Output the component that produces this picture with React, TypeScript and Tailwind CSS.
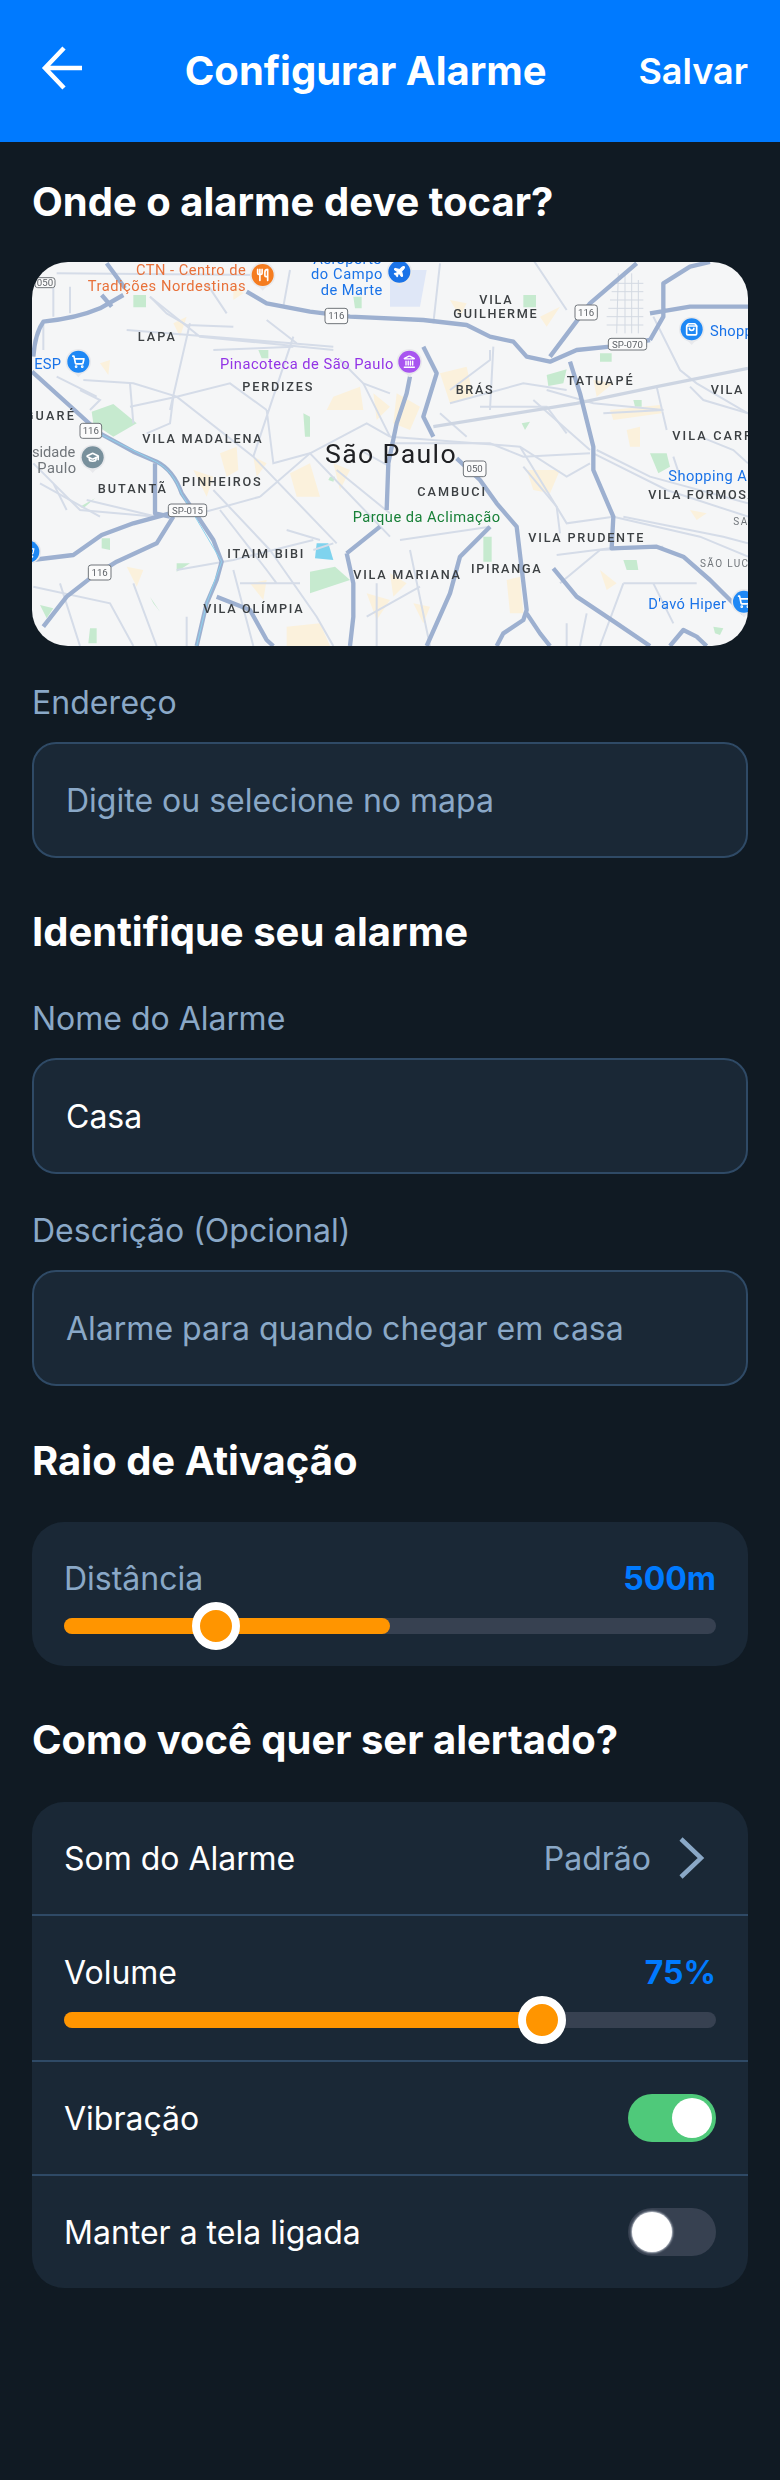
import React from 'react';
import { GraduationCap, Landmark, Plane, ShoppingBag, ShoppingCart, Utensils } from 'lucide-react';

type Label = [string, number, number, number, number?, string?];

const mapFont = { fontFamily: 'Roboto, "Liberation Sans", sans-serif' };

// [text, x start, x end, baseline]; coordinates are map units, 3 per screen pixel
const districts: Label[] = [
  ['LAPA', 413, 525, 272],
  ['PERDIZES', 727, 937, 424],
  ['GUARÉ', 74, 222, 510],
  ['VILA MADALENA', 427, 785, 579],
  ['BUTANTÃ', 293, 498, 728],
  ['PINHEIROS', 546, 782, 707],
  ['ITAIM BIBI', 682, 910, 925],
  ['VILA OLÍMPIA', 610, 908, 1090],
  ['VILA MARIANA', 1060, 1380, 987],
  ['VILA', 1438, 1535, 163],
  ['GUILHERME', 1360, 1610, 204],
  ['BRÁS', 1367, 1478, 432],
  ['TATUAPÉ', 1700, 1898, 406],
  ['VILA', 2132, 2227, 433],
  ['VILA CARRÃO', 2017, 2320, 571],
  ['VILA FORMOSA', 1945, 2268, 747],
  ['CAMBUCI', 1252, 1455, 737],
  ['VILA PRUDENTE', 1585, 1930, 875],
  ['IPIRANGA', 1413, 1622, 968],
];

const places: Label[] = [
  ['Aeroporto', 940, 1145, 42, 44, '#1a73e8'],
  ['do Campo', 933, 1147, 88, 44, '#1a73e8'],
  ['de Marte', 962, 1147, 134, 44, '#1a73e8'],
  ['CTN - Centro de', 408, 737, 75, 44, '#e8713a'],
  ['Tradições Nordestinas', 263, 737, 122, 44, '#e8713a'],
  ['ESP', 103, 183, 358, 44, '#1a73e8'],
  ['Pinacoteca de São Paulo', 660, 1180, 356, 44, '#9334e6'],
  ['sidade', 96, 226, 622, 44, '#70757a'],
  ['Paulo', 112, 228, 668, 44, '#70757a'],
  ['Parque da Aclimação', 1058, 1500, 815, 44, '#188038'],
  ['Shopping', 2130, 2320, 258, 44, '#1a73e8'],
  ['Shopping Anália', 2005, 2340, 694, 44, '#1a73e8'],
  ["D'avó Hiper", 1945, 2178, 1078, 44, '#1a73e8'],
  ['SA', 2200, 2242, 826, 30, '#70757a'],
  ['SÃO LUCAS', 2100, 2290, 950, 30, '#70757a'],
];

const shields: [string, number, number, number, number][] = [
  ['050', 105, 83, 60, 30],
  ['116', 975, 175, 68, 46],
  ['116', 240, 520, 65, 45],
  ['SP-015', 505, 762, 115, 38],
  ['116', 265, 945, 68, 45],
  ['116', 1725, 165, 67, 45],
  ['SP-070', 1825, 265, 115, 35],
  ['050', 1390, 633, 68, 47],
];

const majorRoads = [
  'M100 320 Q105 250 130 215 Q230 205 300 175 L370 135',
  'M305 135 L335 170 M320 40 L375 115',
  'M96 365 L240 495 L300 550 L400 605 L470 635 Q520 660 545 730 L600 810 L640 870 L665 935 L650 990 L620 1060 L590 1188',
  'M96 930 L220 915 L305 855 L400 820 L510 790 M465 640 L465 790 L510 800',
  'M130 1130 L200 1040 L270 985 L350 935 L470 880 L520 800',
  'M740 125 L800 160 L930 185 L1050 200 L1270 210 L1400 225 L1470 260 L1540 275 L1580 320 L1650 335 L1730 300 L1830 290 L1950 270',
  'M1650 320 L1770 160 L1910 40',
  'M1950 270 L1990 200 L1990 100 L2070 50 L2130 36 M1950 190 L2070 170 L2244 170',
  'M1710 335 L1740 430 L1780 590 L1780 660 L1840 800 L1835 895 L1970 890 L2050 920 L2130 990 L2230 1090',
  'M1230 380 L1220 430 L1190 520 L1165 640 L1160 780',
  'M1270 290 L1310 370 L1270 500 L1300 560',
  'M1370 625 L1440 690 L1490 760 L1550 830 L1580 1080 L1570 1110 L1510 1150 L1490 1188',
  'M1660 955 L1730 1040 L1850 1120 L1950 1188 M1470 830 L1380 920 L1350 1030 L1280 1188',
  'M1580 1090 L1620 1150 L1650 1188 M2010 1188 L2050 1140 L2090 1160 L2120 1188',
  'M1040 910 L1140 830 M1040 910 L1060 1000 L1060 1100 L1050 1188',
  'M650 1040 L750 1080 L800 1170 L820 1188',
];

const minorRoads = [
  'M170 70 L780 75 M210 110 L210 190 M450 140 L600 260 L1000 300 M380 240 L1000 290',
  'M250 390 L400 400 L530 440 L760 620 L1010 880 M390 470 L530 440 L690 400 L800 480',
  'M570 220 L510 480 M880 260 L760 620 M1090 400 L1170 560 M800 480 L820 640 L930 610',
  'M930 610 L1100 520 L1170 560 M780 740 L930 610 L1170 860 M600 790 L780 740 M640 720 L810 900',
  'M100 640 L240 780 L470 800 M160 700 L200 780 M810 900 L950 1100 L1000 1188 M700 960 L760 1188',
  'M400 1000 L470 1188 M180 1000 L240 1188 M860 840 L960 870',
  'M1170 560 L1560 590 L1700 680 L1770 640 M1560 590 L1700 820 L1840 800 M1840 800 L2100 860 L2244 920',
  'M1780 610 L2000 720 L2244 800 M1640 420 L1780 460 L1990 480 M1350 460 L1570 400 L1700 420',
  'M1700 180 L1600 30 M1320 40 L1300 220 M1480 290 L1470 480 M1960 200 L2040 360 L2090 400 L2244 490',
  'M1680 1000 L1800 900 L1990 890 M1870 1000 L1800 1188 M1200 870 L1470 830 M1100 1100 L1260 1010',
  'M450 140 L500 190 L560 225 L700 230 M130 215 L130 300 M240 420 L300 450 L270 480 M390 400 L400 520',
  'M520 440 L510 520 L440 550 M290 440 L170 380 M640 300 L880 290 M800 210 L890 280 M1020 330 L1090 400 L1170 430',
  'M660 780 L800 960 L830 1000 M260 750 L470 800 M120 700 L300 800 M530 960 L700 930 L940 870 M720 1000 L900 1000',
  'M1080 600 L1170 650 M1010 660 L1170 790 M1000 880 L940 900 M160 110 L160 200 M620 100 L680 190 M870 60 L850 170',
  'M1170 580 L1470 580 L1570 620 L1770 610 M1570 650 L1670 770 L1680 850 M1470 300 L1470 330 L1350 420',
  'M1600 450 L1770 600 M1810 490 L1990 480 M1970 410 L2000 540 M2070 410 L2110 450 L2244 490',
  'M1790 600 L1950 680 L2244 760 M1870 800 L2170 860 L2244 880 M1670 915 L1830 895 M1870 1000 L2090 1000 M1760 1090 L1740 1188',
  'M100 1010 L330 1060 L400 1188 M560 1100 L560 1188 M1130 1000 L1130 1188 M1230 900 L1290 1188 M1700 1120 L1700 1188',
  'M1440 470 L1640 470 L1700 550 M1320 490 L1400 560 M2020 620 L2040 680 M2100 560 L2200 600 L2244 640 M1960 1000 L2020 1120',
];

// mesh of small streets east of Tatuapé
const meshRoads = [
  'M1840 100 L1930 100 M1835 125 L1930 125 M1830 150 L1930 150 M1825 175 L1930 175 M1820 200 L1930 200 M1820 225 L1930 225',
  'M1855 70 L1850 250 M1875 65 L1875 250 M1895 70 L1895 250 M1915 90 L1915 250',
];

const greens = [
  'M275 485 L340 462 L410 520 L340 560 L280 520 Z',
  'M930 965 L1005 950 L1050 990 L930 1030 Z',
  'M1640 375 L1700 358 L1690 400 L1645 408 Z',
  'M1950 610 L2000 610 L2010 650 L1975 670 Z',
  'M400 135 H438 V172 H400 Z M1060 140 H1085 V175 H1065 Z M1800 310 H1835 V335 H1800 Z M1570 135 H1608 V172 H1570 Z',
  'M910 490 L930 500 L930 560 L915 560 Z M120 1065 L160 1075 L140 1105 Z M450 1040 L480 1085 L460 1060 Z',
  'M1450 860 L1475 860 L1475 935 L1450 935 Z M1870 930 L1910 930 L1915 960 L1880 960 Z M530 940 L570 940 L530 965 Z',
  'M2140 1130 L2170 1135 L2160 1155 L2145 1150 Z M1900 450 H1925 V470 H1905 Z M270 1135 H290 V1180 H265 Z',
  'M775 300 L805 300 L805 325 L785 325 Z M305 865 L330 865 L330 900 L305 895 Z M990 680 L1005 680 L1000 695 L985 690 Z',
  'M240 770 L285 745 L250 775 Z M1565 520 L1590 515 L1575 540 Z',
];

const sand = [
  'M1000 440 L1080 410 L1090 480 L980 480 Z M660 610 L710 590 L715 660 L680 680 Z M870 670 L930 640 L960 740 L890 740 Z',
  'M1320 370 L1400 350 L1420 440 L1350 460 Z M1190 430 L1260 470 L1230 540 L1180 520 Z M1580 660 L1680 660 L1650 730 L1600 720 Z',
  'M1880 540 L1920 530 L1920 590 L1890 590 Z M1830 480 L1980 465 L1985 490 L1840 510 Z M1520 990 L1560 980 L1570 1090 L1530 1090 Z',
  'M860 1130 L960 1120 L990 1188 L860 1188 Z M520 220 L560 200 L540 260 Z M380 950 L430 960 L410 1010 Z',
  'M580 660 L640 680 L620 740 Z M760 620 L800 640 L770 680 Z M1000 640 L1050 660 L1020 720 Z M1120 430 L1170 470 L1130 510 Z',
  'M300 340 L330 330 L325 375 Z M750 1000 L800 990 L790 1050 Z M1100 1030 L1170 1050 L1130 1110 Z M1240 1060 L1290 1070 L1270 1120 Z',
  'M1350 150 L1400 160 L1380 200 Z M1620 200 L1680 170 L1640 230 Z M1780 390 L1840 400 L1790 440 Z M2070 780 L2120 790 L2090 810 Z',
  'M1800 960 L1850 1000 L1820 1020 Z M1170 970 L1220 1000 L1180 1040 Z M700 100 L730 130 L700 150 Z',
];

const Pin = ({ x, y, color, children }: { x: number; y: number; color: string; children: React.ReactNode }) => (
  <g>
    <path d={`M${x - 34} ${y + 10} L${x} ${y + 47} L${x + 34} ${y + 10} Z`} fill="#e8e9ec" />
    <circle cx={x} cy={y} r="38" fill="#e8e9ec" />
    <circle cx={x} cy={y} r="33" fill={color} />
    {children}
  </g>
);

const MapPreview = () => (
  <svg viewBox="96 36 2148 1152" className="block w-full h-[384px] blur-[0.6px]">
    <rect x="96" y="36" width="2148" height="1152" fill="#f5f6f7" />
    <path d="M1170 60 H1280 L1260 170 H1170 Z" fill="#dfe7f7" />
    {sand.map((d) => <path key={d} d={d} fill="#fbf1dc" />)}
    {greens.map((d) => <path key={d} d={d} fill="#c6eacf" />)}
    <path d="M950 880 H985 L1000 930 L945 925 Z" fill="#7fd3ee" />
    {minorRoads.map((d) => <path key={d} d={d} fill="none" stroke="#d5dce8" strokeWidth="6" />)}
    {meshRoads.map((d) => <path key={d} d={d} fill="none" stroke="#d3d9e2" strokeWidth="3" />)}
    <path d="M1300 530 L1730 460 L1970 410 L2244 355" fill="none" stroke="#cdd5e2" strokeWidth="10" />
    {majorRoads.map((d) => <path key={d} d={d} fill="none" stroke="#9db0d0" strokeWidth="13" strokeLinejoin="round" />)}
    <path d="M300 552 L470 636 Q520 662 545 732 L665 935 L620 1060 L590 1188" fill="none" stroke="#8ed3ee" strokeWidth="3" />

    {shields.map(([text, x, y, w, h]) => (
      <g key={text + x}>
        <rect x={x} y={y} width={w} height={h} rx="8" fill="#fbfbfb" stroke="#70757a" strokeWidth="3" />
        <text x={x + w / 2} y={y + h / 2 + 10} textAnchor="middle" fontSize="29" fill="#5f6368" style={mapFont}>{text}</text>
      </g>
    ))}

    {districts.map(([text, x1, x2, y]) => (
      <text key={text + x1} x={x1} y={y} textLength={x2 - x1} lengthAdjust="spacing" fontSize="38" fontWeight="500" fill="#3c4043" style={mapFont}>
        {text}
      </text>
    ))}
    {places.map(([text, x1, x2, y, size, color]) => (
      <text key={text + x1} x={x1} y={y} textLength={x2 - x1} lengthAdjust="spacing" fontSize={size} fill={color} style={mapFont}>
        {text}
      </text>
    ))}
    <text x="975" y="640" textLength="392" lengthAdjust="spacing" fontSize="80" fill="#202124" style={mapFont}>São Paulo</text>

    <Pin x={788} y={75} color="#f57c1f"><Utensils x={768} y={55} width={40} height={40} color="#fff" strokeWidth={3} /></Pin>
    <Pin x={1198} y={65} color="#1a73e8"><Plane x={1178} y={45} width={40} height={40} color="#fff" fill="#fff" /></Pin>
    <Pin x={235} y={335} color="#1e88f5"><ShoppingCart x={215} y={315} width={40} height={40} color="#fff" strokeWidth={3} /></Pin>
    <Pin x={1228} y={335} color="#a855f0"><Landmark x={1208} y={315} width={40} height={40} color="#fff" strokeWidth={2.5} /></Pin>
    <Pin x={2075} y={238} color="#1e88f5"><ShoppingBag x={2055} y={218} width={40} height={40} color="#fff" strokeWidth={3} /></Pin>
    <Pin x={278} y={622} color="#78909c"><GraduationCap x={258} y={602} width={40} height={40} color="#fff" strokeWidth={3} /></Pin>
    <Pin x={85} y={905} color="#1e88f5"><ShoppingCart x={65} y={885} width={40} height={40} color="#fff" /></Pin>
    <Pin x={2232} y={1055} color="#1e88f5"><ShoppingCart x={2212} y={1035} width={40} height={40} color="#fff" strokeWidth={3} /></Pin>
  </svg>
);

const Field = ({ label, value, filled }: { label: string; value: string; filled?: boolean }) => (
  <div>
    <p className="text-[32px] leading-[40px] text-[#8aa8c7] pt-[2px] mb-[19px] [font-kerning:none]">{label}</p>
    <div className={`h-[116px] rounded-[24px] border-2 border-[#2f4a66] bg-[#1a2836] px-[32px] pt-[2px] flex items-center text-[32px] ${filled ? 'text-white' : 'text-[#8aa8c7]'}`}>
      {value}
    </div>
  </div>
);

const Slider = ({ percent, thumbCenter }: { percent: number; thumbCenter: number }) => (
  <div className="relative h-[16px] rounded-[8px] bg-[#374151]">
    <div className="h-full rounded-[8px] bg-[#ff9500]" style={{ width: `${percent}%` }} />
    <div
      className="absolute top-[-16px] w-[48px] h-[48px] rounded-full border-[8px] border-white bg-[#ff9500]"
      style={{ left: thumbCenter - 24 }}
    />
  </div>
);

const Toggle = ({ on }: { on?: boolean }) => (
  <div className={`w-[88px] h-[48px] rounded-full flex items-center px-[4px] ${on ? 'bg-[#4fc97a] justify-end' : 'bg-[#374151] justify-start'}`}>
    <div className={`w-[40px] h-[40px] rounded-full bg-white ${on ? '' : 'shadow-[0_0_2px_1px_rgba(200,205,215,0.9)]'}`} />
  </div>
);

export default function App() {
  return (
    <div className="min-h-[2480px] bg-[#101a23] text-white font-['Inter',sans-serif]">
      <header className="h-[142px] bg-[#007aff] pl-[40px] pr-[32px] pt-[44px] flex justify-between items-start">
        <svg width="44" height="48" viewBox="0 0 44 48" fill="none" stroke="white" strokeWidth="4.5">
          <path d="M42 24 H5 M24 4 L5 24 L24 44" />
        </svg>
        <h1 className="text-[40px] leading-[48px] font-bold ml-[9px] mt-[3px]">Configurar Alarme</h1>
        <button className="text-[36px] leading-[48px] font-semibold mt-[3px]">Salvar</button>
      </header>

      <main className="px-[32px] pt-[36px]">
        <h2 className="text-[40px] leading-[48px] font-bold mb-[36px]">Onde o alarme deve tocar?</h2>
        <div className="h-[384px] rounded-[36px] overflow-hidden mb-[35px]">
          <MapPreview />
        </div>
        <Field label="Endereço" value="Digite ou selecione no mapa" />

        <h2 className="text-[40px] leading-[48px] font-bold mt-[50px] mb-[41px]">Identifique seu alarme</h2>
        <Field label="Nome do Alarme" value="Casa" filled />
        <div className="mt-[35px]">
          <Field label="Descrição (Opcional)" value="Alarme para quando chegar em casa" />
        </div>

        <h2 className="text-[40px] leading-[48px] font-bold mt-[51px] mb-[37px]">Raio de Ativação</h2>
        <section className="rounded-[32px] bg-[#1a2836] px-[32px] pt-[37px] pb-[32px]">
          <div className="flex justify-between mb-[19px] text-[32px] leading-[40px]">
            <span className="text-[#8aa8c7]">Distância</span>
            <span className="font-bold text-[#007aff]">500m</span>
          </div>
          <Slider percent={50} thumbCenter={151.5} />
        </section>

        <h2 className="text-[40px] leading-[48px] font-bold mt-[50px] mb-[38px]">Como você quer ser alertado?</h2>
        <section className="rounded-[32px] bg-[#1a2836]">
          <div className="h-[114px] border-b-2 border-[#2f4a66] px-[32px] flex items-center justify-between text-[32px]">
            <span className="pt-[2px] [font-kerning:none]">Som do Alarme</span>
            <span className="flex items-center text-[#8aa8c7]">
              <span className="pt-[2px]">Padrão</span>
              <svg width="28" height="44" viewBox="0 0 28 44" fill="none" stroke="#8aa8c7" strokeWidth="4.5" className="ml-[26px] mr-[11px]">
                <path d="M4 3 L24 22 L4 41" />
              </svg>
            </span>
          </div>
          <div className="h-[146px] border-b-2 border-[#2f4a66] px-[32px] pt-[37px]">
            <div className="flex justify-between mb-[19px] text-[32px] leading-[40px]">
              <span>Volume</span>
              <span className="font-bold text-[#007aff]">75%</span>
            </div>
            <Slider percent={75} thumbCenter={478} />
          </div>
          <div className="h-[114px] border-b-2 border-[#2f4a66] px-[32px] flex items-center justify-between text-[32px]">
            <span className="pt-[2px]">Vibração</span>
            <Toggle on />
          </div>
          <div className="h-[112px] px-[32px] flex items-center justify-between text-[32px]">
            <span className="pt-[2px]">Manter a tela ligada</span>
            <Toggle />
          </div>
        </section>
      </main>
    </div>
  );
}
